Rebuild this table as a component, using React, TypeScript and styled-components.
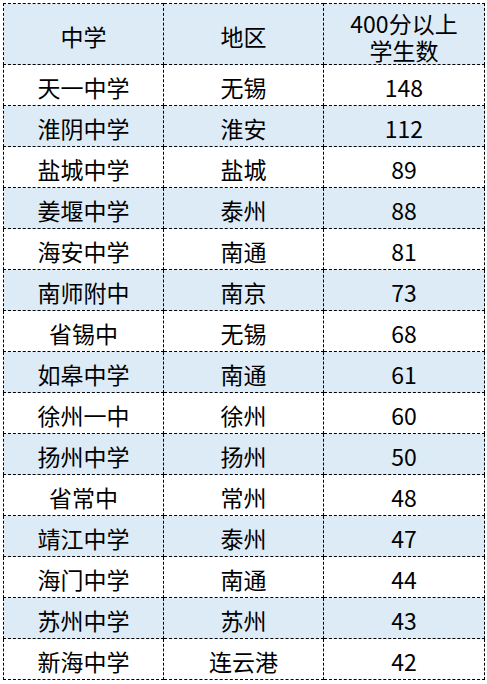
import { FC } from 'react'
import styled, { createGlobalStyle } from 'styled-components'

// ==============================|| data ||============================== //
const rows: [string, string, number][] = [
  ['天一中学', '无锡', 148],
  ['淮阴中学', '淮安', 112],
  ['盐城中学', '盐城', 89],
  ['姜堰中学', '泰州', 88],
  ['海安中学', '南通', 81],
  ['南师附中', '南京', 73],
  ['省锡中', '无锡', 68],
  ['如皋中学', '南通', 61],
  ['徐州一中', '徐州', 60],
  ['扬州中学', '扬州', 50],
  ['省常中', '常州', 48],
  ['靖江中学', '泰州', 47],
  ['海门中学', '南通', 44],
  ['苏州中学', '苏州', 43],
  ['新海中学', '连云港', 42]
]

// ==============================|| index ||============================== //
const App: FC = () => {
  return (
    <Wrap>
      <GlobalStyle />
      <Sheet>
        <colgroup>
          <col style={{ width: 160 }} />
          <col style={{ width: 160 }} />
          <col style={{ width: 161 }} />
        </colgroup>
        <thead>
          <tr>
            <HeadCell>中学</HeadCell>
            <HeadCell>地区</HeadCell>
            <HeadCell>
              400分以上
              <br />
              学生数
            </HeadCell>
          </tr>
        </thead>
        <tbody>
          {rows.map(([school, area, count], i) => (
            <Row key={school} $shaded={i % 2 === 1}>
              <Cell>{school}</Cell>
              <Cell>{area}</Cell>
              <Cell>{count}</Cell>
            </Row>
          ))}
        </tbody>
      </Sheet>
    </Wrap>
  )
}

const GlobalStyle = createGlobalStyle`
  html, body {
    margin: 0;
    background: #fff;
  }
`

const Wrap = styled.div`
  padding: 3px 0 0 3px;
  font-family: 'Noto Sans CJK SC', 'Noto Sans', sans-serif;
  color: #000;
`

const Sheet = styled.table`
  border-collapse: collapse;
  table-layout: fixed;
  width: 481px;
`

const HeadCell = styled.th`
  height: 61px;
  padding: 5px 0 0;
  box-sizing: border-box;
  background: #ddebf7;
  border: 1px dashed #000;
  font-size: 23px;
  font-weight: 400;
  line-height: 27px;
  text-align: center;
  vertical-align: middle;
`

const Row = styled.tr<{ $shaded: boolean }>`
  background: ${p => (p.$shaded ? '#ddebf7' : '#fff')};
`

const Cell = styled.td`
  height: 41px;
  padding: 3px 0 0;
  box-sizing: border-box;
  border: 1px dashed #000;
  font-size: 23px;
  line-height: 26px;
  text-align: center;
  vertical-align: middle;
`

export default App
